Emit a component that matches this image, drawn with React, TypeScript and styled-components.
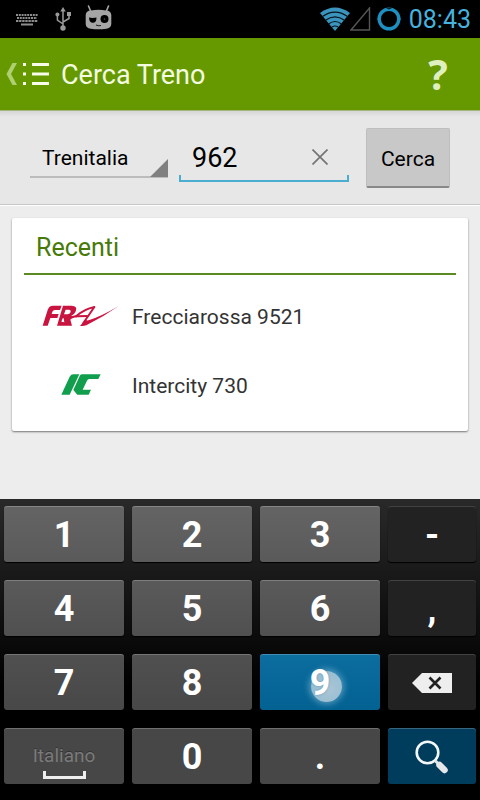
import React, { useState } from 'react';
import styled, { createGlobalStyle, css } from 'styled-components';

const GlobalStyle = createGlobalStyle`
  *, *::before, *::after { box-sizing: border-box; }
  body { margin: 0; background: #ededed; font-family: Roboto, sans-serif; }
  button, input, select { font-family: inherit; margin: 0; }
`;

const Screen = styled.div`
  display: flex;
  flex-direction: column;
  min-height: 100vh;
  background: #ededed;
`;

const StatusBar = styled.div`
  display: flex;
  align-items: center;
  justify-content: space-between;
  height: 38px;
  padding: 0 9px 0 16px;
  background: #000;
`;

const StatusGroup = styled.div<{ $gap: number }>`
  display: flex;
  align-items: center;
  gap: ${({ $gap }) => $gap}px;
`;

const BatterySlot = styled.span`
  display: flex;
  margin-left: 6px;
`;

const Clock = styled.time`
  margin-left: 8px;
  padding-top: 2px;
  color: #46b2de;
  font-size: 25px;
  line-height: 36px;
`;

const ActionBar = styled.header`
  display: flex;
  align-items: center;
  height: 73px;
  padding: 0 24px 0 6px;
  background: #669900;
  border-bottom: 1px solid #a3b67e;
`;

const UpButton = styled.button`
  display: flex;
  align-items: center;
  gap: 6px;
  padding: 0;
  border: 0;
  background: none;
`;

const Title = styled.h1`
  flex: 1;
  margin: 0 0 0 12px;
  padding-top: 2px;
  color: #f3fbe0;
  font-size: 27px;
  font-weight: 400;
  line-height: 32px;
`;

const HelpButton = styled.button`
  width: 36px;
  padding: 0;
  border: 0;
  background: none;
  color: #e0efc0;
  font-family: 'Open Sans', sans-serif;
  font-size: 41px;
  font-weight: 700;
  line-height: 56px;
`;

const SearchForm = styled.form`
  display: grid;
  grid-template-columns: minmax(0, 138fr) minmax(0, 170fr) minmax(0, 84fr);
  align-items: start;
  padding: 17px 30px 16px;
  background: linear-gradient(#d6d6d6, #e7e7e7 6px);
  border-bottom: 1px solid #c6c6c6;
  box-shadow: 0 1px #fff;
  column-gap: 14px;
`;

const SpinnerBox = styled.label`
  position: relative;
  height: 50px;
  border-bottom: 2px solid #bcbcbc;

  &::after {
    content: '';
    position: absolute;
    right: 0;
    bottom: -1px;
    border-style: solid;
    border-width: 0 0 18px 18px;
    border-color: transparent transparent #808080 transparent;
    pointer-events: none;
  }
`;

const Spinner = styled.select`
  appearance: none;
  width: 100%;
  height: 60px;
  padding: 0 20px 0 12px;
  border: 0;
  outline: 0;
  background: none;
  color: #000;
  font-size: 21px;
`;

const NumberBox = styled.div`
  position: relative;
  display: flex;
  align-items: center;
  height: 54px;
  margin: 0 3px 0 -3px;
  padding-right: 19px;
  border-bottom: 2px solid #4badd0;

  &::before {
    content: '';
    position: absolute;
    inset: auto 0 0;
    height: 5px;
    border: solid #4badd0;
    border-width: 0 2px;
    pointer-events: none;
  }
`;

const NumberInput = styled.input`
  flex: 1;
  min-width: 0;
  height: 52px;
  padding: 8px 0 0 13px;
  border: 0;
  outline: 0;
  background: none;
  color: #000;
  font-size: 27px;
`;

const ClearButton = styled.button`
  display: flex;
  padding: 6px 2px 0;
  border: 0;
  background: none;
`;

const SubmitButton = styled.button`
  height: 60px;
  padding: 2px 0 0;
  border: 1px solid #bebebe;
  border-bottom: 2px solid #898989;
  border-radius: 2px;
  background: #c8c8c8;
  color: #000;
  font-size: 21px;
`;

const Content = styled.main`
  flex: 1;
  padding: 13px 12px;
`;

const Card = styled.section`
  padding: 0 12px 11px;
  border-radius: 2px;
  background: #fff;
  box-shadow: 0 1px 2px rgba(0, 0, 0, 0.5);
`;

const CardTitle = styled.h2`
  margin: 0;
  padding: 14px 12px 9px;
  border-bottom: 2px solid #5c8a22;
  color: #477a08;
  font-size: 25px;
  font-weight: 400;
  line-height: 32px;
`;

const RecentList = styled.ul`
  margin: 0;
  padding: 7px 0 0;
  list-style: none;
`;

const RecentRow = styled.button`
  display: flex;
  align-items: center;
  width: 100%;
  height: 69px;
  padding: 0;
  border: 0;
  background: none;
  color: #333;
  font-size: 21px;
  text-align: left;
`;

const LogoSlot = styled.span`
  display: flex;
  justify-content: center;
  width: 108px;
  padding: 0 0 2px 6px;
`;

const Keyboard = styled.div`
  display: grid;
  grid-template-columns: 120fr 120fr 120fr 88fr;
  grid-auto-rows: 56px;
  gap: 18px 8px;
  padding: 7px 4px 16px;
  background: linear-gradient(#292929, #1a1a1a 70px, #000 190px);
`;

type Tone = 'digit1' | 'digit2' | 'digit3' | 'digit4' | 'dark' | 'pressed' | 'action';

const tones: Record<Tone, string> = {
  digit1: 'linear-gradient(#646464, #5a5a5a)',
  digit2: 'linear-gradient(#5a5a5a, #505050)',
  digit3: 'linear-gradient(#505050, #484848)',
  digit4: '#474747',
  dark: '#222',
  pressed: 'linear-gradient(#0c6d9f, #036292)',
  action: '#003c5c',
};

const Key = styled.button<{ $tone: Tone }>`
  position: relative;
  display: flex;
  flex-direction: column;
  align-items: center;
  justify-content: center;
  padding: 2px 0 0;
  border: 0;
  border-radius: 3px;
  background: ${({ $tone }) => tones[$tone]};
  color: #fff;
  font-size: 36px;
  font-weight: 700;
  line-height: 40px;
  box-shadow: inset 0 1px rgba(255, 255, 255, 0.22), 0 1px 1px #000;
  ${({ $tone }) => $tone === 'dark' && css`
    box-shadow: inset 0 1px rgba(255, 255, 255, 0.15), 0 1px 1px #000;
  `}
`;

const Touch = styled.span`
  position: absolute;
  top: 17px;
  left: calc(50% - 9px);
  width: 31px;
  height: 31px;
  border-radius: 50%;
  background: radial-gradient(circle at 60% 60%, rgba(185, 207, 220, 0.9), rgba(205, 222, 232, 0.7));
  box-shadow: 0 0 6px 2px rgba(160, 205, 230, 0.5);
`;

const PressedLabel = styled.span`
  position: relative;
  text-shadow: 0 0 2px rgba(60, 120, 160, 0.7);
`;

const Language = styled.span`
  padding-top: 6px;
  color: #7b7b7b;
  font-size: 19px;
  font-weight: 400;
  line-height: 30px;
  text-shadow: 0 -1px #333;
`;

const SpaceMark = styled.span`
  width: 43px;
  height: 8px;
  border: 3px solid #eee;
  border-top: 0;
`;

const KeyboardIcon = () => (
  <svg width="22" height="13" viewBox="0 0 22 13" fill="none" stroke="#8e8e8e" strokeWidth="2" aria-hidden="true">
    <path d="M0 2h22" strokeDasharray="2 .8" />
    <path d="M1 5h20" strokeDasharray="2 .8" />
    <path d="M0 8h22" strokeDasharray="2.4 .7" />
    <path d="M5 11.5h12" />
  </svg>
);

const UsbIcon = () => (
  <svg width="16" height="24" viewBox="0 0 16 24" fill="none" stroke="#999" strokeWidth="1.5" aria-hidden="true">
    <path d="M8 3v17M8 17l-5.6-4V8M8 15l6-3.500V7" />
    <path d="M8 0l2.700 4.500H5.300z" fill="#999" stroke="none" />
    <circle cx="2.400" cy="7.500" r="2" fill="#999" stroke="none" />
    <rect x="12" y="5" width="4" height="4" fill="#999" stroke="none" />
    <circle cx="8" cy="21" r="2.700" fill="#999" stroke="none" />
  </svg>
);

const DroidIcon = () => (
  <svg width="27" height="28" viewBox="0 0 27 28" aria-hidden="true">
    <path d="M3.500 1l2.500 6M23.500 1L21 7" stroke="#a5a5a5" strokeWidth="1.600" strokeLinecap="round" />
    <path d="M.7 10Q1 5.500 6 5.500q7.500-1.300 15 0 5 0 5.300 4.500v9q-.4 4.300-5 4.800-7.800 1-15.600 0Q1 23.300.7 19z" fill="#a5a5a5" />
    <path d="M4 12.500q3.500.8 7.500 0 0 5.200-3.600 5.300Q4.200 17.700 4 12.500z" fill="#000" />
    <circle cx="19.500" cy="14" r="4" fill="#000" />
    <circle cx="19.500" cy="14" r=".8" fill="#555" />
    <path d="M11 20l2.500.8 2.500-.3" stroke="#222" strokeWidth="1.100" fill="none" />
  </svg>
);

const WifiIcon = () => (
  <svg width="30" height="24" viewBox="0 0 30 24" aria-hidden="true">
    <path d="M0 6Q15-5 30 6L15 24z" fill="#3b94bd" />
    <path d="M2.500 9.500Q15 .8 27.500 9.500M5.500 13.300Q15 6.500 24.500 13.300M8.500 17Q15 12 21.500 17M12 20Q15 18 18 20" fill="none" stroke="#06141c" strokeWidth="1.200" />
  </svg>
);

const SignalIcon = () => (
  <svg width="21" height="24" viewBox="0 0 21 24" aria-hidden="true">
    <path d="M19.500 1v22H1z" fill="none" stroke="#555" strokeWidth="1.400" />
  </svg>
);

const BatteryIcon = () => (
  <svg width="24" height="24" viewBox="0 0 24 24" fill="none" aria-hidden="true">
    <circle cx="12" cy="12" r="9.800" stroke="#1d8fc0" strokeWidth="3.400" />
    <path d="M9.500.8l2.500 1 2.500-1" stroke="#06202c" strokeWidth="1.200" />
    <path d="M22 10l2 2-2 2M2 10l-2 2 2 2" fill="#1d8fc0" />
  </svg>
);

const UpIcon = () => (
  <svg width="11" height="22" viewBox="0 0 11 22" aria-hidden="true">
    <path d="M6.500 0H11L5 11l6 11H6.500L.5 11z" fill="#afcf73" />
  </svg>
);

const MenuIcon = () => (
  <svg width="26" height="22" viewBox="0 0 26 22" fill="#f8fcea" aria-hidden="true">
    <path d="M0 0h3v3H0zM9 0h17v3H9zM0 9.500h3v3H0zM9 9.500h17v3H9zM0 19h3v3H0zM9 19h17v3H9z" />
  </svg>
);

const FrecciarossaLogo = () => (
  <svg width="78" height="22" viewBox="127 256 234 66" fill="#c9143f" aria-hidden="true">
    <path d="M129 318l15-47q4-13 16-13h26l-5 13h-15q-6 0-8 5l-2 7h21l-4 12h-21l-8 23z" />
    <path d="M172 318l18-60h26q17 1 13 14-3 12-14 16l4 4-7 8 5 18h-45zM198 270l-5 14h11q8-1 9-7 1-7-5-7zM189 296l-4 10 9 2-2-12z" fillRule="evenodd" />
    <path d="M206 300Q214 291 234 290L264 289" fill="none" stroke="#c9143f" strokeWidth="6" />
    <path d="M227 291Q254 268 284 262L249 313" fill="none" stroke="#c9143f" strokeWidth="6" strokeLinejoin="round" />
    <path d="M241 318l18-18q2 4 10 1 38-12 88-42-48 34-97 58-12 4-19 1z" />
  </svg>
);

const IntercityLogo = () => (
  <svg width="40" height="21" viewBox="183 459 120 63" fill="#119e4d" aria-hidden="true">
    <path d="M184 521l25-54q4-7 11-7h18l-29 61zM246 460h56l-7 14h-27q-5 0-7 5l-13 27h25l-7 15h-34l-12-14 18-40q3-7 8-7z" />
  </svg>
);

const ClearIcon = () => (
  <svg width="16" height="16" viewBox="0 0 16 16" aria-hidden="true">
    <path d="M.5.5l15 15M15.500.5l-15 15" stroke="#747474" strokeWidth="1.700" />
  </svg>
);

const BackspaceIcon = () => (
  <svg width="40" height="20" viewBox="0 0 40 20" aria-hidden="true">
    <path d="M0 10L10 0h30v20H10z" fill="#eee" />
    <path d="M17.500 4.500l11 11M28.500 4.500l-11 11" stroke="#222" strokeWidth="2.600" />
  </svg>
);

const SearchIcon = () => (
  <svg width="34" height="34" viewBox="0 0 34 34" fill="none" aria-hidden="true">
    <circle cx="12.500" cy="12.500" r="10.800" stroke="#f4f8fa" strokeWidth="2.600" />
    <path d="M20 20.500l4 4" stroke="#e4e8ea" strokeWidth="3" />
    <path d="M24.500 25l5 5" stroke="#e4e8ea" strokeWidth="6.500" strokeLinecap="round" />
  </svg>
);

const recents = [
  { name: 'Frecciarossa 9521', logo: <FrecciarossaLogo /> },
  { name: 'Intercity 730', logo: <IntercityLogo /> },
];

export default function App() {
  const [number, setNumber] = useState('962');
  const type = (c: string) => () => setNumber((n) => n + c);

  const textKey = (c: string, tone: Tone) => (
    <Key key={c} type="button" $tone={tone} onClick={type(c)}>{c}</Key>
  );

  return (
    <>
      <GlobalStyle />
      <Screen>
        <StatusBar>
          <StatusGroup $gap={17}>
            <KeyboardIcon />
            <StatusGroup $gap={14}>
              <UsbIcon />
              <DroidIcon />
            </StatusGroup>
          </StatusGroup>
          <StatusGroup $gap={0}>
            <WifiIcon />
            <SignalIcon />
            <BatterySlot>
              <BatteryIcon />
            </BatterySlot>
            <Clock>08:43</Clock>
          </StatusGroup>
        </StatusBar>

        <ActionBar>
          <UpButton type="button" aria-label="Indietro">
            <UpIcon />
            <MenuIcon />
          </UpButton>
          <Title>Cerca Treno</Title>
          <HelpButton type="button">?</HelpButton>
        </ActionBar>

        <SearchForm onSubmit={(e) => e.preventDefault()}>
          <SpinnerBox>
            <Spinner aria-label="Compagnia" defaultValue="Trenitalia">
              <option>Trenitalia</option>
            </Spinner>
          </SpinnerBox>
          <NumberBox>
            <NumberInput
              aria-label="Numero treno"
              inputMode="numeric"
              value={number}
              onChange={(e) => setNumber(e.target.value)}
            />
            <ClearButton type="button" aria-label="Cancella testo" onClick={() => setNumber('')}>
              <ClearIcon />
            </ClearButton>
          </NumberBox>
          <SubmitButton type="submit">Cerca</SubmitButton>
        </SearchForm>

        <Content>
          <Card>
            <CardTitle>Recenti</CardTitle>
            <RecentList>
              {recents.map((r) => (
                <li key={r.name}>
                  <RecentRow type="button">
                    <LogoSlot>{r.logo}</LogoSlot>
                    {r.name}
                  </RecentRow>
                </li>
              ))}
            </RecentList>
          </Card>
        </Content>

        <Keyboard>
          {['1', '2', '3'].map((c) => textKey(c, 'digit1'))}
          {textKey('-', 'dark')}
          {['4', '5', '6'].map((c) => textKey(c, 'digit2'))}
          {textKey(',', 'dark')}
          {['7', '8'].map((c) => textKey(c, 'digit3'))}
          <Key type="button" $tone="pressed" onClick={type('9')}>
            <Touch />
            <PressedLabel>9</PressedLabel>
          </Key>
          <Key type="button" $tone="dark" aria-label="Elimina" onClick={() => setNumber((n) => n.slice(0, -1))}>
            <BackspaceIcon />
          </Key>
          <Key type="button" $tone="digit4" onClick={type(' ')}>
            <Language>Italiano</Language>
            <SpaceMark />
          </Key>
          {['0', '.'].map((c) => textKey(c, 'digit4'))}
          <Key type="button" $tone="action" aria-label="Cerca">
            <SearchIcon />
          </Key>
        </Keyboard>
      </Screen>
    </>
  );
}
